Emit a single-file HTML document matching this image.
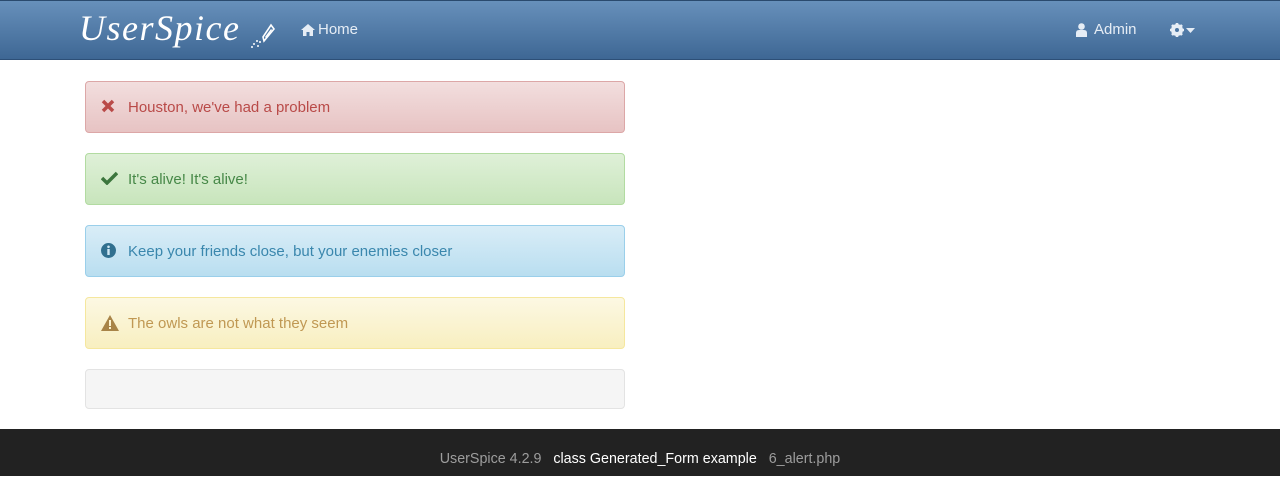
<!DOCTYPE html>
<html><head><meta charset="utf-8"><style>
body{margin:0;width:1280px;height:476px;overflow:hidden;font-family:"Liberation Sans",sans-serif;background:#fff;position:relative}
.nav{position:absolute;top:0;left:0;width:1280px;height:60px;background:linear-gradient(#6790bb,#3e6794);border-top:1px solid #2a4a6e;border-bottom:1px solid #2d4f77;box-sizing:border-box}
.logo{position:absolute;left:79px;top:6px;font-family:"URW Chancery L","Z003",cursive;font-style:italic;font-size:36px;color:#fff;letter-spacing:1.5px}
.nl{position:absolute;top:20px;color:#e6edf5;font-size:15px}
.al{position:absolute;left:85px;width:540px;height:52px;box-sizing:border-box;border:1px solid;border-radius:4px;font-size:15px;line-height:52px;padding-left:42px}
.al svg{position:absolute;left:15px;top:17px}
.foot{position:absolute;top:429px;left:0;width:1280px;height:47px;background:#222;font-size:14.3px;line-height:60px;text-align:center;color:#9d9d9d}
</style></head><body>
<div class="nav">
<div class="logo">UserSpice</div>
<svg style="position:absolute;left:249px;top:20px" width="26" height="28" viewBox="0 0 26 28"><path d="M14 16 L22 4 L25 8 L15 20 Z" fill="none" stroke="#fff" stroke-width="1.6"/><path d="M16 16 L22 8 L23 9 L17 17Z" fill="#fff"/><g fill="#fff"><circle cx="8" cy="20" r="1"/><circle cx="5" cy="23" r="1"/><circle cx="9" cy="25" r="1"/><circle cx="11" cy="21" r="1"/><circle cx="3" cy="26" r="1"/></g></svg>
<svg style="position:absolute;left:301px;top:23px" width="14" height="12" viewBox="0 0 14 12"><path d="M7 0 L14 6 L12 6 L12 12 L8.5 12 L8.5 8 L5.5 8 L5.5 12 L2 12 L2 6 L0 6Z" fill="#e6edf5"/></svg>
<div class="nl" style="left:318px">Home</div>
<svg style="position:absolute;left:1076px;top:22px" width="11" height="14" viewBox="0 0 11 14"><circle cx="5.5" cy="3.5" r="3.3" fill="#e6edf5"/><path d="M0 14 L0 10 Q0 7 3 7 L8 7 Q11 7 11 10 L11 14Z" fill="#e6edf5"/></svg>
<div class="nl" style="left:1094px">Admin</div>
<svg style="position:absolute;left:1170px;top:22px" width="14" height="14" viewBox="0 0 14 14"><circle cx="7" cy="7" r="4.5" fill="none" stroke="#e6edf5" stroke-width="3"/><g stroke="#e6edf5" stroke-width="2.6"><path d="M7 0V14M0 7H14M2 2L12 12M12 2L2 12"/></g><circle cx="7" cy="7" r="2" fill="#4b76a3"/></svg>
<svg style="position:absolute;left:1186px;top:27px" width="9" height="5"><path d="M0 0H9L4.5 5Z" fill="#e6edf5"/></svg>
</div>
<div class="al" style="top:81px;background:linear-gradient(#f2dede,#e7c3c3);border-color:#dca7a7;color:#b94a48"><svg width="14" height="14" viewBox="0 0 14 14"><path d="M2 2L12 12M12 2L2 12" stroke="#b94a48" stroke-width="3.5"/></svg>Houston, we've had a problem</div>
<div class="al" style="top:153px;background:linear-gradient(#dff0d8,#c8e5bc);border-color:#b2dba1;color:#468847"><svg width="17" height="14" viewBox="0 0 17 14"><path d="M1 7L6 12L16 2" fill="none" stroke="#3c763d" stroke-width="3.5"/></svg>It's alive! It's alive!</div>
<div class="al" style="top:225px;background:linear-gradient(#d9edf7,#b9def0);border-color:#9acfea;color:#3a87ad"><svg width="15" height="15" viewBox="0 0 15 15"><circle cx="7.5" cy="7.5" r="7.5" fill="#31708f"/><rect x="6.3" y="6" width="2.4" height="6" fill="#d0e8f4"/><circle cx="7.5" cy="3.8" r="1.3" fill="#d0e8f4"/></svg>Keep your friends close, but your enemies closer</div>
<div class="al" style="top:297px;background:linear-gradient(#fcf8e3,#f8efc0);border-color:#f5e79e;color:#c09853"><svg width="18" height="16" viewBox="0 0 18 16"><path d="M9 0L18 16H0Z" fill="#a88448"/><rect x="8" y="5" width="2" height="6" fill="#fbf3d0"/><rect x="8" y="12" width="2" height="2" fill="#fbf3d0"/></svg>The owls are not what they seem</div>
<div style="position:absolute;left:85px;top:369px;width:540px;height:40px;box-sizing:border-box;background:#f5f5f5;border:1px solid #e3e3e3;border-radius:4px"></div>
<div class="foot">UserSpice 4.2.9 &nbsp; <span style="color:#fff">class Generated_Form example</span> &nbsp; 6_alert.php</div>
</body></html>
